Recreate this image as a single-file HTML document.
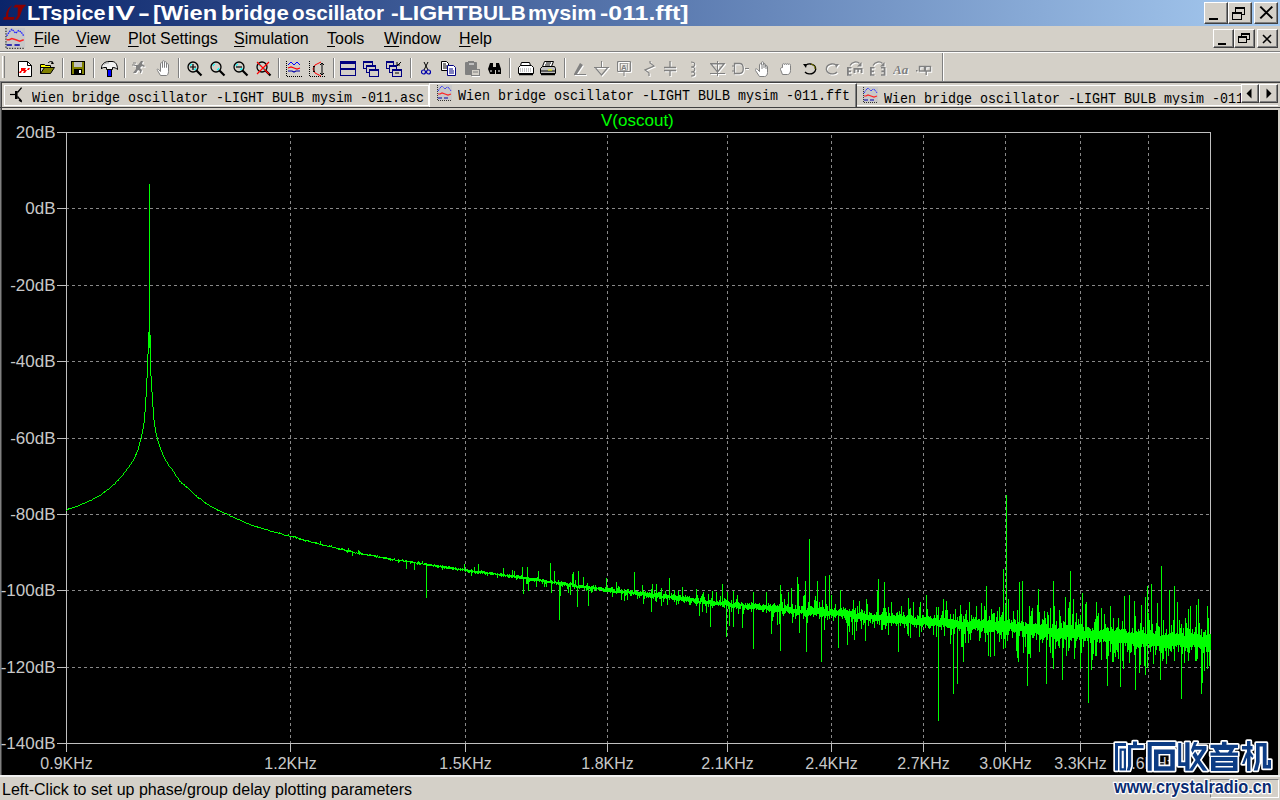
<!DOCTYPE html>
<html><head><meta charset="utf-8">
<style>
*{margin:0;padding:0;box-sizing:border-box}
html,body{width:1280px;height:800px;overflow:hidden;background:#d4d0c8;font-family:"Liberation Sans",sans-serif;position:relative}
.abs{position:absolute}
#title{left:0;top:0;width:1280px;height:26px;background:linear-gradient(to right,#0a246a 0%,#a6caf0 100%)}
.tw{position:absolute;top:1px;transform-origin:0 0;color:#fff;font-weight:bold;font-size:20.5px;line-height:24px;white-space:nowrap}
.btn{position:absolute;background:#d4d0c8;border-top:1px solid #fff;border-left:1px solid #fff;border-right:1px solid #404040;border-bottom:1px solid #404040;box-shadow:inset -1px -1px 0 #808080}
#menu{left:0;top:26px;width:1280px;height:25px}
#menu span{position:absolute;top:4px;font-size:16px;line-height:18px;color:#000;white-space:nowrap}
#menu u{text-decoration:underline;text-underline-offset:2px;text-decoration-thickness:1px}
.hl1{left:0;width:1280px;height:1px}
#plotbg{left:2px;top:110px;width:1276px;height:665px;background:#000}
#status{left:0;top:775px;width:1280px;height:25px}
#status .t{left:2px;top:6px;font-size:16px;line-height:18px;color:#000;white-space:nowrap}
.tab{position:absolute;font-family:"Liberation Mono",monospace;font-size:15px;line-height:16px;color:#000;white-space:nowrap;transform:scaleX(0.8889);transform-origin:0 0}
.sep{top:58px;width:2px;height:20px;border-left:1px solid #808080;border-right:1px solid #fff}
.tabbox{position:absolute;border-top:1px solid #fff;border-left:1px solid #fff;border-right:1px solid #fff;border-bottom:1px solid #fff}
</style></head><body>
<div id="title" class="abs">
  <svg class="abs" style="left:0;top:0" width="28" height="26" viewBox="0 0 28 26"><path d="M12.6 4.8L9.5 9L8.3 13L8.2 17H14.6L13.8 19.8H3L4 17H5.8L6.3 12.5L8.5 8.2Z" fill="#8b0000"/><path d="M15.2 4.8H26.2L22.8 8.6L21 13L19.8 16.5L17.6 19.8H14.9L16.5 17.2L17.6 15.6L17.9 7.6H13.2Z" fill="#8b0000"/></svg>
  <span class="tw" style="left:26.89px;transform:scaleX(1.054)">LTspice</span><span class="tw" style="left:107.34px;transform:scaleX(1.438)">IV</span><span class="tw" style="left:138.25px;transform:scaleX(1.750)">-</span><span class="tw" style="left:152.70px;transform:scaleX(1.152)">[Wien</span><span class="tw" style="left:220.88px;transform:scaleX(1.081)">bridge</span><span class="tw" style="left:292.49px;transform:scaleX(1.009)">oscillator</span><span class="tw" style="left:390.88px;transform:scaleX(1.125)">-LIGHT</span><span class="tw" style="left:467.97px;transform:scaleX(1.014)">BULB</span><span class="tw" style="left:527.92px;transform:scaleX(1.053)">mysim</span><span class="tw" style="left:599.79px;transform:scaleX(1.214)">-011.fft]</span>
  <div class="btn" style="left:1204px;top:2px;width:24px;height:22px"><svg class="abs" style="left:0;top:0" width="22" height="20"><rect x="4" y="15" width="9" height="2" fill="#000"/></svg></div><div class="btn" style="left:1228px;top:2px;width:24px;height:22px"><svg class="abs" style="left:0;top:0" width="22" height="20"><g fill="none" stroke="#000" shape-rendering="crispEdges"><path d="M6.5 4.5h9v7h-9z"/><path d="M6 5.5h10"/><path d="M3.5 9.5h9v7h-9z" fill="#d4d0c8"/><path d="M3 10.5h10"/></g></svg></div><div class="btn" style="left:1254px;top:2px;width:24px;height:22px"><svg class="abs" style="left:0;top:0" width="22" height="20"><path d="M5.3 3.6L17.3 15.4M17.3 3.6L5.3 15.4" stroke="#000" stroke-width="2"/></svg></div>
</div>
<div id="menu" class="abs">
  <svg class="abs" style="left:4px;top:2px" width="21" height="21" viewBox="0 0 16 16"><rect x="1" y="0" width="15" height="15" fill="#c8c8c8"/><path d="M1.5 0v15.5H16" stroke="#333" stroke-dasharray="1 1" fill="none"/>
<path d="M2 6l2-3l2-2l3 3l2-2l2 1l2 3" stroke="#22f" fill="none" stroke-dasharray="1.2 0.6"/><path d="M2 9h2l2-1l3 1l3 1l3-1" stroke="#f22" fill="none" stroke-width="1.2"/><path d="M2 13h4M8 13h4" stroke="#00a" stroke-width="1.2"/></svg>
  <span style="left:34px"><u>F</u>ile</span>
  <span style="left:76px"><u>V</u>iew</span>
  <span style="left:128px"><u>P</u>lot Settings</span>
  <span style="left:234px"><u>S</u>imulation</span>
  <span style="left:327px"><u>T</u>ools</span>
  <span style="left:384px"><u>W</u>indow</span>
  <span style="left:459px"><u>H</u>elp</span>
  <div class="btn" style="left:1213px;top:3px;width:21px;height:19px"><svg class="abs" style="left:0;top:0" width="19" height="17"><rect x="4" y="13" width="8" height="2" fill="#000"/></svg></div><div class="btn" style="left:1234px;top:3px;width:21px;height:19px"><svg class="abs" style="left:0;top:0" width="19" height="17"><g fill="none" stroke="#000" shape-rendering="crispEdges"><rect x="6.5" y="3.5" width="8" height="6"/><path d="M6 4.5h9"/><rect x="3.5" y="6.5" width="8" height="6" fill="#d4d0c8"/><path d="M3 7.5h9"/></g></svg></div><div class="btn" style="left:1257px;top:3px;width:21px;height:19px"><svg class="abs" style="left:0;top:0" width="19" height="17"><path d="M5 5L13 13M13 5L5 13" stroke="#000" stroke-width="1.6"/></svg></div>
</div>
<div class="abs hl1" style="top:51px;background:#808080"></div>
<div class="abs hl1" style="top:52px;background:#fff"></div>
<div class="abs" style="left:2px;top:56px;width:3px;height:22px;border-left:1px solid #fff;border-right:1px solid #808080"></div>
<svg class="abs" style="left:17px;top:61px" width="17" height="17" viewBox="0 0 17 17"><path d="M1.5 0.5H10.5L14.5 4.5V15.5H1.5Z" fill="#fff" stroke="#000"/><path d="M10.5 0.5V4.5H14.5" fill="none" stroke="#000"/>
<path d="M4 7h5l-1 2h2l1-2h2l-1 2h-2l-2 3h-2l1-2h-3zM3 10h2l-1 2h-2z" fill="#f00"/></svg><svg class="abs" style="left:40px;top:61px" width="17" height="17" viewBox="0 0 17 17"><path d="M0.5 3.5h4l1 1h5v2h-10z" fill="#ff0" stroke="#000"/><path d="M0.5 12.5V4.5M0.5 12.5h10l4-6h-10z" fill="#808000" stroke="#000"/>
<path d="M8 2c2-2 4-2 5 0" fill="none" stroke="#000"/><path d="M12 0l2 3l-3 0z" fill="#000"/></svg><svg class="abs" style="left:71px;top:61px" width="17" height="17" viewBox="0 0 17 17"><rect x="0.5" y="0.5" width="13" height="13" fill="#808000" stroke="#000"/><rect x="3" y="1" width="8" height="5" fill="#c0c0c0"/>
<rect x="3" y="8" width="8" height="5" fill="#000"/><rect x="8" y="9" width="2" height="3" fill="#fff"/></svg><svg class="abs" style="left:101px;top:61px" width="17" height="17" viewBox="0 0 17 17"><path d="M0.5 7C0.5 3 4 0.5 8 0.5H11C14.5 0.5 16.5 3.5 16.5 8.5C15 7 13.5 6.5 11.5 6.5V8.5H5.5V6.5H3C2 6.5 1 7 0.5 8Z" fill="#f0f0f0" stroke="#000"/><path d="M2.5 4C3.5 2.5 5 1.8 8 1.8" stroke="#a0a0a0" fill="none"/>
<rect x="6.5" y="8.5" width="4" height="7" fill="#0000ff" stroke="#000"/></svg><svg class="abs" style="left:132px;top:60px" width="17" height="17" viewBox="0 0 17 17"><g transform="translate(1,1)" opacity="1"><path d="M9 1l2 0l-1 3l3 2l-1 1l-2-1l-2 2l2 2l-1 3l-1 0l0-2l-2-1l-2 3l-3 0l3-4l0-3l-2 0l1-1l3 0z" fill="#fff"/><path d="M1 3h3M0 5h3" stroke="#fff"/></g><g><path d="M9 1l2 0l-1 3l3 2l-1 1l-2-1l-2 2l2 2l-1 3l-1 0l0-2l-2-1l-2 3l-3 0l3-4l0-3l-2 0l1-1l3 0z" fill="#808080"/><path d="M1 3h3M0 5h3" stroke="#808080"/></g></svg><svg class="abs" style="left:156px;top:60px" width="17" height="17" viewBox="0 0 17 17"><path d="M4.5 15.5l-3-5c-1-1 0-2 1-1l2 2v-8c0-1 2-1 2 0v4v-6c0-1 2-1 2 0v6v-5c0-1 2-1 2 0v5v-3c0-1 2-1 2 0v7c0 2-1 4-2 4z" fill="#fff" stroke="#808080"/></svg><svg class="abs" style="left:187px;top:61px" width="17" height="17" viewBox="0 0 17 17"><circle cx="6" cy="6" r="5" fill="#d4d0c8" stroke="#000" stroke-width="1.3"/><path d="M3 5a3 3 0 0 1 2-2M9 7a3 3 0 0 1-2 2" stroke="#0ff" stroke-width="1.2" fill="none"/>
<path d="M9.5 9.5L14.5 14.5" stroke="#000" stroke-width="2.2"/><path d="M3 6h6M6 3v6" stroke="#000" stroke-width="1.2"/></svg><svg class="abs" style="left:210px;top:61px" width="17" height="17" viewBox="0 0 17 17"><circle cx="6" cy="6" r="5" fill="#d4d0c8" stroke="#000" stroke-width="1.3"/><path d="M3 5a3 3 0 0 1 2-2M9 7a3 3 0 0 1-2 2" stroke="#0ff" stroke-width="1.2" fill="none"/>
<path d="M9.5 9.5L14.5 14.5" stroke="#000" stroke-width="2.2"/></svg><svg class="abs" style="left:233px;top:61px" width="17" height="17" viewBox="0 0 17 17"><circle cx="6" cy="6" r="5" fill="#d4d0c8" stroke="#000" stroke-width="1.3"/><path d="M3 5a3 3 0 0 1 2-2M9 7a3 3 0 0 1-2 2" stroke="#0ff" stroke-width="1.2" fill="none"/>
<path d="M9.5 9.5L14.5 14.5" stroke="#000" stroke-width="2.2"/><path d="M3 6h6" stroke="#000" stroke-width="1.2"/></svg><svg class="abs" style="left:256px;top:61px" width="17" height="17" viewBox="0 0 17 17"><circle cx="6" cy="6" r="5" fill="#d4d0c8" stroke="#000" stroke-width="1.3"/><path d="M3 5a3 3 0 0 1 2-2M9 7a3 3 0 0 1-2 2" stroke="#0ff" stroke-width="1.2" fill="none"/>
<path d="M9.5 9.5L14.5 14.5" stroke="#000" stroke-width="2.2"/><path d="M1 1L13 13M13 1L1 13" stroke="#f00" stroke-width="1.2"/></svg><svg class="abs" style="left:286px;top:61px" width="17" height="17" viewBox="0 0 17 17"><path d="M0.5 0v15.5H16" stroke="#000" fill="none" stroke-dasharray="1 1"/><path d="M2 4l3-3l3 3l3-3l3 3" stroke="#00f" fill="none"/>
<path d="M2 7l3-1l3 1l3 1l3-1" stroke="#f00" fill="none" stroke-width="1.2"/><path d="M2 10h4l2 1l2-1h4" stroke="#00a" fill="none" stroke-width="1.2"/></svg><svg class="abs" style="left:309px;top:61px" width="17" height="17" viewBox="0 0 17 17"><path d="M0.5 0v15.5H16" stroke="#000" fill="none" stroke-dasharray="1 1"/><path d="M12 1l-6 3l-2 4l2 4l6 3" stroke="#f00" fill="none"/>
<path d="M13 2v12M11 4l2-2l2 2M11 12l2 2l2-2M5 5v6M4 6l1-1l1 1M4 10l1 1l1-1" stroke="#000" fill="none"/></svg><svg class="abs" style="left:340px;top:61px" width="17" height="17" viewBox="0 0 17 17"><rect x="0.5" y="0.5" width="15" height="14" fill="#d4d0c8" stroke="#000080"/><rect x="1" y="1" width="15" height="2" fill="#000080"/><rect x="1" y="7" width="15" height="2" fill="#000080"/><path d="M0.5 7.5h15" stroke="#000080"/></svg><svg class="abs" style="left:363px;top:61px" width="17" height="17" viewBox="0 0 17 17"><rect x="0.5" y="0.5" width="9" height="7" fill="#d4d0c8" stroke="#000080"/><rect x="0" y="0" width="10" height="2" fill="#000080"/>
<rect x="3.5" y="4.5" width="9" height="7" fill="#d4d0c8" stroke="#000080"/><rect x="3" y="4" width="10" height="2" fill="#000080"/>
<rect x="6.5" y="8.5" width="9" height="7" fill="#d4d0c8" stroke="#000080"/><rect x="6" y="8" width="10" height="2" fill="#000080"/></svg><svg class="abs" style="left:386px;top:61px" width="17" height="17" viewBox="0 0 17 17"><rect x="0.5" y="0.5" width="7" height="7" fill="#d4d0c8" stroke="#000080"/><rect x="0" y="0" width="8" height="2" fill="#000080"/>
<rect x="3.5" y="4.5" width="7" height="7" fill="#d4d0c8" stroke="#000080"/><rect x="3" y="4" width="8" height="2" fill="#000080"/>
<rect x="6.5" y="8.5" width="9" height="7" fill="#d4d0c8" stroke="#000080"/><rect x="6" y="8" width="10" height="2" fill="#000080"/><path d="M9 12h4" stroke="#000"/><path d="M11 5l4-4M11 1v3h3" stroke="#000" fill="none"/></svg><svg class="abs" style="left:421px;top:61px" width="17" height="17" viewBox="0 0 17 17"><path d="M3 1l4 8M7 1l-4 8" stroke="#000"/><circle cx="2.5" cy="11" r="2" fill="none" stroke="#00a" stroke-width="1.2"/><circle cx="7.5" cy="11" r="2" fill="none" stroke="#00a" stroke-width="1.2"/></svg><svg class="abs" style="left:441px;top:61px" width="17" height="17" viewBox="0 0 17 17"><path d="M0.5 0.5h5l2 2v7h-7z" fill="#fff" stroke="#000"/><path d="M2 3h3M2 5h4M2 7h4" stroke="#000"/>
<path d="M6.5 4.5h6l2 2v8h-8z" fill="#fff" stroke="#000080"/><path d="M8 8h4M8 10h5M8 12h5" stroke="#000080"/></svg><svg class="abs" style="left:464px;top:61px" width="17" height="17" viewBox="0 0 17 17"><rect x="1" y="1" width="12" height="13" rx="1" fill="#808080"/><rect x="4" y="0" width="6" height="3" fill="#808080"/><path d="M5 3h5" stroke="#fff"/><rect x="7.5" y="8.5" width="8" height="6" fill="#d4d0c8" stroke="#808080"/><path d="M9 11h5" stroke="#808080"/><path d="M8 15.5h8" stroke="#fff"/></svg><svg class="abs" style="left:487px;top:61px" width="17" height="17" viewBox="0 0 17 17"><path d="M1 8l2-6h3v4h3v-4h3l2 6v5h-5v-4h-1v4h-5z" fill="#000"/><path d="M3 10h2M11 10h2" stroke="#fff"/></svg><svg class="abs" style="left:518px;top:61px" width="17" height="17" viewBox="0 0 17 17"><path d="M3.5 1.5h8l1 3h-10z" fill="#fff" stroke="#000"/><path d="M0.5 6.5l2-2h11l2 2v6h-15z" fill="#fff" stroke="#000"/><path d="M2 8h12M2 10h12" stroke="#888" stroke-dasharray="1 1"/><path d="M1 13.5h14" stroke="#000" stroke-width="1.5"/></svg><svg class="abs" style="left:540px;top:61px" width="17" height="17" viewBox="0 0 17 17"><path d="M4.5 0.5h9l-2 5h-9z" fill="#fff" stroke="#000"/><path d="M6 2h5M5 4h5" stroke="#000"/><path d="M0.5 7.5l2-2h12l1 2v5h-15z" fill="#c0c0c0" stroke="#000"/><path d="M1 10h14" stroke="#000"/><path d="M8 9h4" stroke="#ff0" stroke-width="1"/><path d="M1 13.5h14" stroke="#000" stroke-width="1.5"/></svg><svg class="abs" style="left:573px;top:61px" width="17" height="17" viewBox="0 0 17 17"><g transform="translate(1,1)" opacity="1"><path d="M1 13.5h12" stroke="#fff"/><path d="M1 13l6-11l3 2l-6 9z" fill="#fff"/></g><g><path d="M1 13.5h12" stroke="#808080"/><path d="M1 13l6-11l3 2l-6 9z" fill="#808080"/></g></svg><svg class="abs" style="left:594px;top:61px" width="17" height="17" viewBox="0 0 17 17"><g transform="translate(1,1)" opacity="1"><path d="M7.5 0v6M0 6.5h15" stroke="#fff" stroke-width="1"/><path d="M1.5 7l6 7l6-7" stroke="#fff" fill="none" stroke-width="1.2"/></g><g><path d="M7.5 0v6M0 6.5h15" stroke="#808080" stroke-width="1"/><path d="M1.5 7l6 7l6-7" stroke="#808080" fill="none" stroke-width="1.2"/></g></svg><svg class="abs" style="left:617px;top:61px" width="17" height="17" viewBox="0 0 17 17"><g transform="translate(1,1)" opacity="1"><rect x="0.5" y="0.5" width="13" height="10" rx="1" fill="none" stroke="#fff" stroke-width="1.2"/><path d="M7 11v4" stroke="#fff"/><text x="7" y="9" font-size="8" font-family="Liberation Sans" text-anchor="middle" fill="#fff" font-weight="bold">A</text><rect x="3.5" y="2.5" width="7" height="7" fill="none" stroke="#fff" stroke-width="0.6"/></g><g><rect x="0.5" y="0.5" width="13" height="10" rx="1" fill="none" stroke="#808080" stroke-width="1.2"/><path d="M7 11v4" stroke="#808080"/><text x="7" y="9" font-size="8" font-family="Liberation Sans" text-anchor="middle" fill="#808080" font-weight="bold">A</text><rect x="3.5" y="2.5" width="7" height="7" fill="none" stroke="#808080" stroke-width="0.6"/></g></svg><svg class="abs" style="left:642px;top:61px" width="17" height="17" viewBox="0 0 17 17"><g transform="translate(1,1)" opacity="1"><path d="M8 0v2l4 3l-9 4l4 3v3" stroke="#fff" fill="none" stroke-width="1.2"/></g><g><path d="M8 0v2l4 3l-9 4l4 3v3" stroke="#808080" fill="none" stroke-width="1.2"/></g></svg><svg class="abs" style="left:664px;top:61px" width="17" height="17" viewBox="0 0 17 17"><g transform="translate(1,1)" opacity="1"><path d="M6 0v6M6 9v6M0 6.5h12M0 9.5h12" stroke="#fff" stroke-width="1.3"/></g><g><path d="M6 0v6M6 9v6M0 6.5h12M0 9.5h12" stroke="#808080" stroke-width="1.3"/></g></svg><svg class="abs" style="left:690px;top:61px" width="17" height="17" viewBox="0 0 17 17"><g transform="translate(1,1)" opacity="1"><path d="M1 1c5 0 5 5 0 5c5 0 5 5 0 5c5 0 5 4 0 4" stroke="#fff" fill="none" stroke-width="1.2"/></g><g><path d="M1 1c5 0 5 5 0 5c5 0 5 5 0 5c5 0 5 4 0 4" stroke="#808080" fill="none" stroke-width="1.2"/></g></svg><svg class="abs" style="left:710px;top:61px" width="17" height="17" viewBox="0 0 17 17"><g transform="translate(1,1)" opacity="1"><path d="M7.5 0v15M0 2.5h15M0 12.5h15" stroke="#fff"/><path d="M1 3l6.5 8l6.5-8z" fill="none" stroke="#fff" stroke-width="1.2"/></g><g><path d="M7.5 0v15M0 2.5h15M0 12.5h15" stroke="#808080"/><path d="M1 3l6.5 8l6.5-8z" fill="none" stroke="#808080" stroke-width="1.2"/></g></svg><svg class="abs" style="left:732px;top:61px" width="17" height="17" viewBox="0 0 17 17"><g transform="translate(1,1)" opacity="1"><path d="M2.5 2.5h5c5 0 5 10 0 10h-5z" fill="none" stroke="#fff" stroke-width="1.3"/><path d="M0 5h3M0 10h3M13 7.5h4" stroke="#fff"/></g><g><path d="M2.5 2.5h5c5 0 5 10 0 10h-5z" fill="none" stroke="#808080" stroke-width="1.3"/><path d="M0 5h3M0 10h3M13 7.5h4" stroke="#808080"/></g></svg><svg class="abs" style="left:755px;top:61px" width="17" height="17" viewBox="0 0 17 17"><path d="M4.5 15.5l-4-6c-1-2 1-2 2-1l2 2v-7c0-1 2-1 2 0v-2c0-1 2-1 2 0v2c0-1 2-1 2 0v2c0-1 2-1 2 0v6c0 2-1 4-3 4z" fill="#fff" stroke="#808080"/><path d="M7 3v5M9 2v5M11 4v4" stroke="#808080"/></svg><svg class="abs" style="left:779px;top:61px" width="17" height="17" viewBox="0 0 17 17"><path d="M3.5 13.5l-2-5c0-1 0-2 2-2v-3c0-1 2-1 2 0c0-1 2-1 2 0c0-1 2-1 2 0c0-1 2-1 2 1v5c0 2-1 4-3 4z" fill="#fff" stroke="#808080"/></svg><svg class="abs" style="left:802px;top:62px" width="17" height="17" viewBox="0 0 17 17"><path d="M4 3a6 5 0 1 1 -1 7" stroke="#000" fill="none" stroke-width="1.4"/><path d="M9 2a6 5 0 0 1 4 5" stroke="#808000" fill="none" stroke-width="1"/><path d="M1 2l4 0l-1 4z" fill="#000"/></svg><svg class="abs" style="left:825px;top:62px" width="17" height="17" viewBox="0 0 17 17"><g transform="translate(1,1)" opacity="1"><path d="M11 3a6 5 0 1 0 1 7" stroke="#fff" fill="none" stroke-width="1.4"/><path d="M14 2l-4 0l1 4z" fill="#fff"/></g><g><path d="M11 3a6 5 0 1 0 1 7" stroke="#808080" fill="none" stroke-width="1.4"/><path d="M14 2l-4 0l1 4z" fill="#808080"/></g></svg><svg class="abs" style="left:847px;top:59px" width="17" height="17" viewBox="0 0 17 17"><g transform="translate(1,1)" opacity="1"><path d="M0 8h4.5v1.6h-2.7v2h2.3v1.6h-2.3v2h2.7v1.6h-4.5z" fill="#fff"/><path d="M6.5 9h9v5h-1.7v-3.3h-1.9v2.6h-1.6v-2.6h-1.9v3.3h-1.9z" fill="#fff"/><path d="M3 6.5C5 2.5 10 2 12.5 4.5" stroke="#fff" stroke-width="1.2" fill="none"/><path d="M14.5 3v4.5h-4.5z" fill="#fff"/></g><g><path d="M0 8h4.5v1.6h-2.7v2h2.3v1.6h-2.3v2h2.7v1.6h-4.5z" fill="#808080"/><path d="M6.5 9h9v5h-1.7v-3.3h-1.9v2.6h-1.6v-2.6h-1.9v3.3h-1.9z" fill="#808080"/><path d="M3 6.5C5 2.5 10 2 12.5 4.5" stroke="#808080" stroke-width="1.2" fill="none"/><path d="M14.5 3v4.5h-4.5z" fill="#808080"/></g></svg><svg class="abs" style="left:870px;top:59px" width="17" height="17" viewBox="0 0 17 17"><g transform="translate(1,1)" opacity="1"><path d="M0 8h4.5v1.6h-2.7v2h2.3v1.6h-2.3v2h2.7v1.6h-4.5z" fill="#fff"/><path d="M15.5 8h-4.5v1.6h2.7v2h-2.3v1.6h2.3v2h-2.7v1.6h4.5z" fill="#fff"/><path d="M3 6.5C5 2.5 10 2 12.5 4.5" stroke="#fff" stroke-width="1.2" fill="none"/><path d="M14.5 3v4.5h-4.5z" fill="#fff"/></g><g><path d="M0 8h4.5v1.6h-2.7v2h2.3v1.6h-2.3v2h2.7v1.6h-4.5z" fill="#808080"/><path d="M15.5 8h-4.5v1.6h2.7v2h-2.3v1.6h2.3v2h-2.7v1.6h4.5z" fill="#808080"/><path d="M3 6.5C5 2.5 10 2 12.5 4.5" stroke="#808080" stroke-width="1.2" fill="none"/><path d="M14.5 3v4.5h-4.5z" fill="#808080"/></g></svg><svg class="abs" style="left:893px;top:61px" width="17" height="17" viewBox="0 0 17 17"><g transform="translate(1,1)" opacity="1"><text x="0" y="13" font-size="13" font-style="italic" font-weight="bold" font-family="Liberation Serif" fill="#fff">Aa</text></g><g><text x="0" y="13" font-size="13" font-style="italic" font-weight="bold" font-family="Liberation Serif" fill="#808080">Aa</text></g></svg><svg class="abs" style="left:916px;top:59px" width="17" height="17" viewBox="0 0 17 17"><g transform="translate(1,1)" opacity="1"><rect x="0" y="11" width="1.5" height="1.5" fill="#fff"/><rect x="3.5" y="7.5" width="5" height="4.5" fill="none" stroke="#fff" stroke-width="1.4"/><rect x="9.5" y="7.5" width="5" height="4.5" fill="none" stroke="#fff" stroke-width="1.4"/><path d="M10.2 12v4" stroke="#fff" stroke-width="1.4"/></g><g><rect x="0" y="11" width="1.5" height="1.5" fill="#808080"/><rect x="3.5" y="7.5" width="5" height="4.5" fill="none" stroke="#808080" stroke-width="1.4"/><rect x="9.5" y="7.5" width="5" height="4.5" fill="none" stroke="#808080" stroke-width="1.4"/><path d="M10.2 12v4" stroke="#808080" stroke-width="1.4"/></g></svg><div class="abs sep" style="left:62px"></div><div class="abs sep" style="left:93px"></div><div class="abs sep" style="left:124px"></div><div class="abs sep" style="left:178px"></div><div class="abs sep" style="left:278px"></div><div class="abs sep" style="left:333px"></div><div class="abs sep" style="left:410px"></div><div class="abs sep" style="left:509px"></div><div class="abs sep" style="left:564px"></div>
<div class="abs" style="left:942px;top:53px;width:2px;height:28px;border-left:1px solid #808080;border-right:1px solid #fff"></div>
<div class="abs hl1" style="top:81px;background:#808080"></div>
<div class="abs hl1" style="top:82px;background:#404040"></div>
<div class="abs" style="left:0;top:82px;width:1px;height:693px;background:#808080"></div><div class="abs" style="left:1px;top:82px;width:1px;height:693px;background:#404040"></div>
<!-- tabs -->
<div class="tabbox" style="left:4px;top:85px;width:425px;height:21px"></div>
<svg class="abs" style="left:8px;top:85px" width="16" height="20" viewBox="0 0 16 20"><path d="M2 9.5H7.5" stroke="#000" stroke-width="1.2"/><rect x="7" y="6" width="2.6" height="8" fill="#000"/><path d="M9.5 7.5L13.6 2.6M9.5 11.5L13.6 16.5" stroke="#000" stroke-width="1.3"/><path d="M14 17.5L10.5 15.8L12.8 13.5Z" fill="#000"/></svg>
<div class="tab" style="left:32px;top:91px">Wien bridge oscillator -LIGHT BULB mysim -011.asc</div>
<div class="abs" style="left:429px;top:83px;width:428px;height:24px;background:#d4d0c8;border-top:1px solid #fff;border-left:1px solid #fff;border-right:1px solid #404040;box-shadow:inset -1px 0 0 #808080"></div>
<svg class="abs" style="left:436px;top:85px" width="16" height="16" viewBox="0 0 16 16"><rect x="1" y="0" width="15" height="15" fill="#c8c8c8"/><path d="M1.5 0v15.5H16" stroke="#333" stroke-dasharray="1 1" fill="none"/>
<path d="M2 6l2-3l2-2l3 3l2-2l2 1l2 3" stroke="#22f" fill="none" stroke-dasharray="1.2 0.6"/><path d="M2 9h2l2-1l3 1l3 1l3-1" stroke="#f22" fill="none" stroke-width="1.2"/><path d="M2 13h4M8 13h4" stroke="#00a" stroke-width="1.2"/></svg>
<div class="tab" style="left:458px;top:89px">Wien bridge oscillator -LIGHT BULB mysim -011.fft</div>
<div class="abs" style="left:857px;top:85px;width:384px;height:21px;border-top:1px solid #fff;border-bottom:1px solid #fff;overflow:hidden">
  <svg class="abs" style="left:5px;top:1px" width="16" height="16" viewBox="0 0 16 16"><rect x="1" y="0" width="15" height="15" fill="#c8c8c8"/><path d="M1.5 0v15.5H16" stroke="#333" stroke-dasharray="1 1" fill="none"/>
<path d="M2 6l2-3l2-2l3 3l2-2l2 1l2 3" stroke="#22f" fill="none" stroke-dasharray="1.2 0.6"/><path d="M2 9h2l2-1l3 1l3 1l3-1" stroke="#f22" fill="none" stroke-width="1.2"/><path d="M2 13h4M8 13h4" stroke="#00a" stroke-width="1.2"/></svg>
  <div class="tab" style="left:27px;top:6px">Wien bridge oscillator -LIGHT BULB mysim -011.fft</div>
</div>
<div class="btn" style="left:1241px;top:84px;width:18px;height:19px"><svg class="abs" style="left:0;top:0" width="16" height="17"><path d="M4.5 8.5l5-5v10z" fill="#000"/></svg></div>
<div class="btn" style="left:1259px;top:84px;width:19px;height:19px"><svg class="abs" style="left:0;top:0" width="17" height="17"><path d="M11.5 8.5l-5-5v10z" fill="#000"/></svg></div>

<div class="abs" style="left:1241px;top:105px;width:37px;height:1px;background:#fff"></div>
<div class="abs hl1" style="top:107px;background:#404040"></div>
<div id="plotbg" class="abs"></div>

<svg class="abs" style="left:0;top:0" width="1280" height="800" viewBox="0 0 1280 800">
<g stroke="#888888" stroke-width="1" stroke-dasharray="3 3" shape-rendering="crispEdges"><line x1="66" y1="208.5" x2="1210" y2="208.5"/><line x1="66" y1="285.5" x2="1210" y2="285.5"/><line x1="66" y1="361.5" x2="1210" y2="361.5"/><line x1="66" y1="438.5" x2="1210" y2="438.5"/><line x1="66" y1="514.5" x2="1210" y2="514.5"/><line x1="66" y1="590.5" x2="1210" y2="590.5"/><line x1="66" y1="667.5" x2="1210" y2="667.5"/><line x1="290.5" y1="135" x2="290.5" y2="743"/><line x1="465.5" y1="135" x2="465.5" y2="743"/><line x1="607.5" y1="135" x2="607.5" y2="743"/><line x1="727.5" y1="135" x2="727.5" y2="743"/><line x1="831.5" y1="135" x2="831.5" y2="743"/><line x1="923.5" y1="135" x2="923.5" y2="743"/><line x1="1005.5" y1="135" x2="1005.5" y2="743"/><line x1="1080.5" y1="135" x2="1080.5" y2="743"/><line x1="1148.5" y1="135" x2="1148.5" y2="743"/></g>
<g stroke="#c0c0c0" stroke-width="1" shape-rendering="crispEdges">
<rect x="66.5" y="132.5" width="1144" height="611" fill="none"/><line x1="57" y1="132.5" x2="66" y2="132.5"/><line x1="57" y1="208.5" x2="66" y2="208.5"/><line x1="57" y1="285.5" x2="66" y2="285.5"/><line x1="57" y1="361.5" x2="66" y2="361.5"/><line x1="57" y1="438.5" x2="66" y2="438.5"/><line x1="57" y1="514.5" x2="66" y2="514.5"/><line x1="57" y1="590.5" x2="66" y2="590.5"/><line x1="57" y1="667.5" x2="66" y2="667.5"/><line x1="57" y1="743.5" x2="66" y2="743.5"/><line x1="66.5" y1="743" x2="66.5" y2="752"/><line x1="290.5" y1="743" x2="290.5" y2="752"/><line x1="465.5" y1="743" x2="465.5" y2="752"/><line x1="607.5" y1="743" x2="607.5" y2="752"/><line x1="727.5" y1="743" x2="727.5" y2="752"/><line x1="831.5" y1="743" x2="831.5" y2="752"/><line x1="923.5" y1="743" x2="923.5" y2="752"/><line x1="1005.5" y1="743" x2="1005.5" y2="752"/><line x1="1080.5" y1="743" x2="1080.5" y2="752"/><line x1="1148.5" y1="743" x2="1148.5" y2="752"/></g>
<g fill="#c8c8c8" font-family="Liberation Sans, sans-serif" font-size="16"><text x="55.5" y="138" text-anchor="end" font-size="17">20dB</text><text x="55.5" y="214" text-anchor="end" font-size="17">0dB</text><text x="55.5" y="291" text-anchor="end" font-size="17">-20dB</text><text x="55.5" y="367" text-anchor="end" font-size="17">-40dB</text><text x="55.5" y="444" text-anchor="end" font-size="17">-60dB</text><text x="55.5" y="520" text-anchor="end" font-size="17">-80dB</text><text x="55.5" y="596" text-anchor="end" font-size="17">-100dB</text><text x="55.5" y="673" text-anchor="end" font-size="17">-120dB</text><text x="55.5" y="749" text-anchor="end" font-size="17">-140dB</text><text transform="translate(66.5 769) scale(0.94 1)" text-anchor="middle" font-size="17">0.9KHz</text><text transform="translate(290.5 769) scale(0.94 1)" text-anchor="middle" font-size="17">1.2KHz</text><text transform="translate(465.5 769) scale(0.94 1)" text-anchor="middle" font-size="17">1.5KHz</text><text transform="translate(607.5 769) scale(0.94 1)" text-anchor="middle" font-size="17">1.8KHz</text><text transform="translate(727.5 769) scale(0.94 1)" text-anchor="middle" font-size="17">2.1KHz</text><text transform="translate(831.5 769) scale(0.94 1)" text-anchor="middle" font-size="17">2.4KHz</text><text transform="translate(923.5 769) scale(0.94 1)" text-anchor="middle" font-size="17">2.7KHz</text><text transform="translate(1005.5 769) scale(0.94 1)" text-anchor="middle" font-size="17">3.0KHz</text><text transform="translate(1080.5 769) scale(0.94 1)" text-anchor="middle" font-size="17">3.3KHz</text><text transform="translate(1148.5 769) scale(0.94 1)" text-anchor="middle" font-size="17">3.6KHz</text></g>
<text x="637.4" y="126" fill="#00ff00" font-family="Liberation Sans, sans-serif" font-size="17" text-anchor="middle">V(oscout)</text>
<path d="M66 510v1M67 509v1M68 508v2M69 508v1M70 508v1M71 508v1M72 507v1M73 507v1M74 507v1M75 506v1M76 506v1M77 506v1M78 505v1M79 505v1M80 504v1M81 504v1M82 503v1M83 503v1M84 503v1M85 502v1M86 502v1M87 501v1M88 501v1M89 500v1M90 500v1M91 500v1M92 499v1M93 498v1M94 498v1M95 497v1M96 497v1M97 496v1M98 496v1M99 495v1M100 495v1M101 494v1M102 493v1M103 492v1M104 491v2M105 491v1M106 490v1M107 489v1M108 489v1M109 488v1M110 487v1M111 486v1M112 485v1M113 484v1M114 484v1M115 482v2M116 481v1M117 480v1M118 479v2M119 478v1M120 477v1M121 476v1M122 475v1M123 473v2M124 472v1M125 471v1M126 469v2M127 468v1M128 467v1M129 465v2M130 464v1M131 462v2M132 461v1M133 459v2M134 457v2M135 454v3M136 452v3M137 450v2M138 446v4M139 442v4M140 439v3M141 434v5M142 429v5M143 423v6M144 412v11M145 397v15M146 378v19M147 354v24M148 332v22M149 184v164M150 335v41M151 376v16M152 392v15M153 407v13M154 420v7M155 427v6M156 433v4M157 437v4M158 441v3M159 444v3M160 447v3M161 450v2M162 452v3M163 455v2M164 457v2M165 459v2M166 461v1M167 462v2M168 464v2M169 466v1M170 467v1M171 468v1M172 469v2M173 471v1M174 472v2M175 474v2M176 476v1M177 477v1M178 478v2M179 480v2M180 481v1M181 482v2M182 483v1M183 484v1M184 484v2M185 486v1M186 486v2M187 487v1M188 488v1M189 489v1M190 490v1M191 491v1M192 492v1M193 493v1M194 494v1M195 495v1M196 495v2M197 497v1M198 497v2M199 498v1M200 498v1M201 499v1M202 500v1M203 501v1M204 502v1M205 502v2M206 503v1M207 504v1M208 504v1M209 505v1M210 506v1M211 506v1M212 507v1M213 507v1M214 508v1M215 508v1M216 509v1M217 509v2M218 510v1M219 510v1M220 511v1M221 511v1M222 512v1M223 512v1M224 513v1M225 513v1M226 513v1M227 514v1M228 514v1M229 515v1M230 516v1M231 516v1M232 516v1M233 517v1M234 517v1M235 518v1M236 518v1M237 519v1M238 519v1M239 519v1M240 520v1M241 520v1M242 521v1M243 521v1M244 522v1M245 522v1M246 523v1M247 523v1M248 523v1M249 524v1M250 524v1M251 525v1M252 525v1M253 525v1M254 526v1M255 526v1M256 526v1M257 526v2M258 527v1M259 527v1M260 527v1M261 528v1M262 528v1M263 528v1M264 529v1M265 529v1M266 529v1M267 529v1M268 530v1M269 530v1M270 531v1M271 531v1M272 531v1M273 531v1M274 532v1M275 532v1M276 532v1M277 532v1M278 533v1M279 532v2M280 533v1M281 533v1M282 534v1M283 534v1M284 535v1M285 535v1M286 535v1M287 535v1M288 534v2M289 536v1M290 536v1M291 536v1M292 536v1M293 536v2M294 536v1M295 536v2M296 537v2M297 537v1M298 538v1M299 538v2M300 538v2M301 539v1M302 539v1M303 539v2M304 540v1M305 540v2M306 540v1M307 540v1M308 540v2M309 541v1M310 541v1M311 542v1M312 542v1M313 542v1M314 542v1M315 542v2M316 542v2M317 543v1M318 543v1M319 544v1M320 541v4M321 544v1M322 544v2M323 545v1M324 545v1M325 545v1M326 545v1M327 546v1M328 546v1M329 545v2M330 546v1M331 545v2M332 547v1M333 547v1M334 547v1M335 547v1M336 548v1M337 548v1M338 548v2M339 548v2M340 549v1M341 548v2M342 548v2M343 549v1M344 549v2M345 550v1M346 550v2M347 550v3M348 548v4M349 550v2M350 550v2M351 551v1M352 551v5M353 552v1M354 552v1M355 553v1M356 552v1M357 553v1M358 550v4M359 551v4M360 552v2M361 553v2M362 553v2M363 554v1M364 554v1M365 554v1M366 554v1M367 554v2M368 555v1M369 554v2M370 554v2M371 555v1M372 555v1M373 555v1M374 555v2M375 555v2M376 556v2M377 555v2M378 557v1M379 556v2M380 557v1M381 557v1M382 557v1M383 557v2M384 557v2M385 557v2M386 557v2M387 558v1M388 558v2M389 558v2M390 558v3M391 559v1M392 559v2M393 559v1M394 558v2M395 560v1M396 560v1M397 560v1M398 559v4M399 560v2M400 560v1M401 560v1M402 559v2M403 560v2M404 561v1M405 560v2M406 560v9M407 561v1M408 561v1M409 561v1M410 561v3M411 561v2M412 561v2M413 562v1M414 562v8M415 562v1M416 563v1M417 562v3M418 561v3M419 562v3M420 563v2M421 563v1M422 561v3M423 564v1M424 563v2M425 563v2M426 563v35M427 564v2M428 564v2M429 564v2M430 564v2M431 564v2M432 565v1M433 565v2M434 564v2M435 565v2M436 565v2M437 565v3M438 565v3M439 566v1M440 565v2M441 566v2M442 565v5M443 566v2M444 566v3M445 566v2M446 566v3M447 567v2M448 566v3M449 566v3M450 567v2M451 567v2M452 567v3M453 567v3M454 568v1M455 567v3M456 568v2M457 569v2M458 568v2M459 569v1M460 568v3M461 569v1M462 568v3M463 569v1M464 564v7M465 570v2M466 569v2M467 569v3M468 570v3M469 570v3M470 570v2M471 569v7M472 570v3M473 571v1M474 567v6M475 571v3M476 571v2M477 571v3M478 564v10M479 571v2M480 571v3M481 570v3M482 571v3M483 571v2M484 571v3M485 572v3M486 572v2M487 572v4M488 573v1M489 572v2M490 572v3M491 572v3M492 572v3M493 573v2M494 573v1M495 573v2M496 574v1M497 573v5M498 574v1M499 574v2M500 573v3M501 573v4M502 574v2M503 568v9M504 574v2M505 575v2M506 575v1M507 574v3M508 575v3M509 574v4M510 575v2M511 575v3M512 570v8M513 575v2M514 571v7M515 576v2M516 575v5M517 575v4M518 575v3M519 576v3M520 576v3M521 575v4M522 567v12M523 577v17M524 577v2M525 577v2M526 577v7M527 567v17M528 577v14M529 578v4M530 578v3M531 578v3M532 578v3M533 578v3M534 578v4M535 578v3M536 578v9M537 577v4M538 571v10M539 579v3M540 579v2M541 580v2M542 579v5M543 579v3M544 580v7M545 580v4M546 580v7M547 581v2M548 581v2M549 581v2M550 563v20M551 580v13M552 581v3M553 582v1M554 571v13M555 581v2M556 582v3M557 582v2M558 580v5M559 582v38M560 582v14M561 581v5M562 582v5M563 582v3M564 582v4M565 582v3M566 583v3M567 583v6M568 584v9M569 583v4M570 582v13M571 583v2M572 574v13M573 572v15M574 584v5M575 580v7M576 585v3M577 586v21M578 571v17M579 585v4M580 585v3M581 585v3M582 585v3M583 577v11M584 586v4M585 586v2M586 585v6M587 583v7M588 586v20M589 586v3M590 587v4M591 586v7M592 586v6M593 585v4M594 587v3M595 585v5M596 587v4M597 588v1M598 587v3M599 587v4M600 587v3M601 587v3M602 588v3M603 588v4M604 589v3M605 587v5M606 578v14M607 587v5M608 588v4M609 588v4M610 588v5M611 587v5M612 587v10M613 589v4M614 589v4M615 591v2M616 582v12M617 588v5M618 586v7M619 587v6M620 591v2M621 589v11M622 590v4M623 591v2M624 589v12M625 591v5M626 590v5M627 589v11M628 589v4M629 591v3M630 591v5M631 590v6M632 590v4M633 592v3M634 572v22M635 590v5M636 591v4M637 591v8M638 592v4M639 592v6M640 591v5M641 592v4M642 585v10M643 591v13M644 592v7M645 591v5M646 593v5M647 592v5M648 593v5M649 592v5M650 593v5M651 589v23M652 584v14M653 594v5M654 591v6M655 593v8M656 584v18M657 593v5M658 592v5M659 592v7M660 592v7M661 588v18M662 596v2M663 594v8M664 594v5M665 591v7M666 594v5M667 595v10M668 595v3M669 578v22M670 596v2M671 593v6M672 595v5M673 594v6M674 590v12M675 595v5M676 596v9M677 596v5M678 591v13M679 595v6M680 595v5M681 597v4M682 587v14M683 596v6M684 597v6M685 595v6M686 597v5M687 596v5M688 597v5M689 596v9M690 598v7M691 598v5M692 598v3M693 598v4M694 599v4M695 598v6M696 589v17M697 595v9M698 598v5M699 601v15M700 598v6M701 596v6M702 594v18M703 592v12M704 597v7M705 600v6M706 601v12M707 601v3M708 594v13M709 600v4M710 600v27M711 598v8M712 591v17M713 601v5M714 601v5M715 602v3M716 592v13M717 601v4M718 602v4M719 600v5M720 596v10M721 602v3M722 584v23M723 601v6M724 598v10M725 599v6M726 600v37M727 592v14M728 601v8M729 602v24M730 603v4M731 600v12M732 604v4M733 591v36M734 603v5M735 602v5M736 599v10M737 595v13M738 602v12M739 603v6M740 604v5M741 602v4M742 603v25M743 604v10M744 605v5M745 603v5M746 605v4M747 603v7M748 604v6M749 603v6M750 605v4M751 602v10M752 603v6M753 592v57M754 604v5M755 603v5M756 604v6M757 604v5M758 604v6M759 603v7M760 605v5M761 606v4M762 605v7M763 604v8M764 605v5M765 605v4M766 592v21M767 606v4M768 603v8M769 605v7M770 604v7M771 606v28M772 605v16M773 604v13M774 603v10M775 605v7M776 606v6M777 605v20M778 606v6M779 604v20M780 585v66M781 594v17M782 602v12M783 608v8M784 599v15M785 605v8M786 606v5M787 604v8M788 592v21M789 607v7M790 607v6M791 588v26M792 604v19M793 609v8M794 609v4M795 605v14M796 609v7M797 577v38M798 584v31M799 606v27M800 610v3M801 606v8M802 606v7M803 596v23M804 595v21M805 581v36M806 610v42M807 608v15M808 602v14M809 539v76M810 606v10M811 606v9M812 607v7M813 608v9M814 600v15M815 596v19M816 601v15M817 581v33M818 608v6M819 602v17M820 607v10M821 607v55M822 600v17M823 607v9M824 609v21M825 576v42M826 604v12M827 606v14M828 611v5M829 575v44M830 609v6M831 595v22M832 609v7M833 610v11M834 608v9M835 604v14M836 610v6M837 611v4M838 610v38M839 609v7M840 590v26M841 608v9M842 610v9M843 607v9M844 609v9M845 608v12M846 610v13M847 610v35M848 611v15M849 609v23M850 611v6M851 611v11M852 609v26M853 600v19M854 610v30M855 608v14M856 614v17M857 606v16M858 613v6M859 601v18M860 612v9M861 609v20M862 610v10M863 613v12M864 611v12M865 614v27M866 599v21M867 604v16M868 615v11M869 612v9M870 613v10M871 613v6M872 615v9M873 615v7M874 614v14M875 615v6M876 612v9M877 591v33M878 579v42M879 615v10M880 615v5M881 614v16M882 612v18M883 608v17M884 582v43M885 608v21M886 612v14M887 616v7M888 607v28M889 613v10M890 616v7M891 602v24M892 613v10M893 615v9M894 615v8M895 616v8M896 613v13M897 612v12M898 615v37M899 611v12M900 614v12M901 606v17M902 616v8M903 612v12M904 615v13M905 617v7M906 616v10M907 615v19M908 598v38M909 609v14M910 608v30M911 615v9M912 616v9M913 602v23M914 618v9M915 617v8M916 619v9M917 615v10M918 616v9M919 607v30M920 602v24M921 618v14M922 615v12M923 615v10M924 617v7M925 617v11M926 595v30M927 609v17M928 616v12M929 617v12M930 616v12M931 618v8M932 619v7M933 618v17M934 615v11M935 618v7M936 607v30M937 615v11M938 607v114M939 620v7M940 618v9M941 615v15M942 611v14M943 599v28M944 618v18M945 610v16M946 601v26M947 610v18M948 619v9M949 619v9M950 614v30M951 619v16M952 619v10M953 614v80M954 620v14M955 609v19M956 620v7M957 617v67M958 621v8M959 616v15M960 605v24M961 614v33M962 622v25M963 616v46M964 619v15M965 614v29M966 610v17M967 620v11M968 622v21M969 602v32M970 621v19M971 615v18M972 619v11M973 617v12M974 619v10M975 617v13M976 606v22M977 620v11M978 619v11M979 619v22M980 621v17M981 603v29M982 620v11M983 619v9M984 606v27M985 610v32M986 586v47M987 621v14M988 620v36M989 616v16M990 620v37M991 609v23M992 614v18M993 613v19M994 613v43M995 622v8M996 617v14M997 611v23M998 621v12M999 607v35M1000 617v18M1001 615v24M1002 612v20M1003 569v80M1004 621v18M1005 605v43M1006 495v140M1007 620v21M1008 599v36M1009 619v12M1010 623v6M1011 620v11M1012 622v16M1013 611v21M1014 619v14M1015 620v12M1016 624v27M1017 610v48M1018 622v40M1019 582v54M1020 623v8M1021 621v10M1022 581v56M1023 622v31M1024 626v11M1025 622v25M1026 623v11M1027 624v62M1028 624v30M1029 606v48M1030 616v42M1031 611v24M1032 608v30M1033 624v14M1034 624v12M1035 623v10M1036 624v16M1037 605v29M1038 589v46M1039 612v40M1040 625v15M1041 624v15M1042 619v24M1043 620v20M1044 611v27M1045 618v19M1046 624v60M1047 612v28M1048 615v19M1049 628v19M1050 608v45M1051 628v9M1052 624v34M1053 581v88M1054 606v33M1055 625v24M1056 621v21M1057 629v12M1058 628v18M1059 610v38M1060 616v23M1061 623v15M1062 628v52M1063 621v27M1064 622v17M1065 597v43M1066 625v31M1067 625v12M1068 608v43M1069 602v46M1070 571v69M1071 625v16M1072 614v24M1073 599v39M1074 629v30M1075 622v26M1076 613v28M1077 625v14M1078 619v18M1079 624v16M1080 615v54M1081 624v29M1082 593v46M1083 627v20M1084 631v10M1085 604v37M1086 602v36M1087 627v14M1088 627v76M1089 628v10M1090 629v14M1091 631v39M1092 628v32M1093 630v24M1094 622v18M1095 619v37M1096 602v54M1097 616v26M1098 613v26M1099 631v12M1100 630v12M1101 608v52M1102 630v9M1103 629v13M1104 614v27M1105 624v18M1106 628v31M1107 627v59M1108 628v28M1109 631v10M1110 606v46M1111 627v17M1112 629v33M1113 618v44M1114 631v22M1115 630v27M1116 628v22M1117 627v25M1118 618v41M1119 629v14M1120 630v57M1121 629v14M1122 621v40M1123 629v40M1124 596v47M1125 629v17M1126 631v12M1127 633v19M1128 632v18M1129 595v68M1130 633v20M1131 632v20M1132 628v16M1133 633v13M1134 601v54M1135 616v74M1136 631v18M1137 632v15M1138 629v19M1139 631v42M1140 623v42M1141 605v42M1142 630v14M1143 627v20M1144 633v33M1145 597v78M1146 634v12M1147 586v82M1148 613v31M1149 620v28M1150 630v22M1151 584v63M1152 624v22M1153 633v31M1154 634v12M1155 631v24M1156 623v27M1157 603v43M1158 626v20M1159 627v24M1160 636v44M1161 566v87M1162 635v26M1163 620v39M1164 635v13M1165 633v18M1166 629v35M1167 635v13M1168 634v22M1169 590v59M1170 633v18M1171 625v27M1172 632v14M1173 620v29M1174 586v75M1175 634v12M1176 633v14M1177 602v43M1178 634v18M1179 620v25M1180 628v19M1181 624v75M1182 633v21M1183 628v19M1184 636v27M1185 618v33M1186 623v25M1187 628v24M1188 609v52M1189 629v24M1190 606v41M1191 633v17M1192 629v18M1193 634v11M1194 632v15M1195 627v34M1196 605v56M1197 634v25M1198 599v48M1199 623v25M1200 635v14M1201 629v65M1202 637v46M1203 632v21M1204 632v39M1205 630v17M1206 635v17M1207 606v63M1208 618v34M1209 634v32M1210 634v16" fill="none" stroke="#00ff00" stroke-width="1" shape-rendering="crispEdges" transform="translate(0.5,0)"/>
</svg>
<div id="status" class="abs">
  <div class="abs hl1" style="top:0;height:2px;background:#f0f0f0"></div>
  <div class="t abs">Left-Click to set up phase/group delay plotting parameters</div>
  <div class="abs" style="left:1210px;top:4px;width:69px;height:19px;border-top:1px solid #808080;border-left:1px solid #808080;border-bottom:1px solid #fff;border-right:1px solid #fff"></div>
</div>
<svg class="abs" style="left:0;top:0" width="1280" height="800" viewBox="0 0 1280 800">
<path d="M1115.00 743.00h11.00v3.00h-11.00Z M1115.00 743.00h3.00v27.50h-3.00Z M1119.50 748.50h2.20v22.00h-2.20Z M1123.80 748.50h2.20v22.00h-2.20Z M1119.50 748.50h6.50v2.20h-6.50Z M1119.50 768.30h6.50v2.20h-6.50Z M1133.00 741.50h4.00v3.60h-4.00Z M1128.00 745.00h15.60v3.20h-15.60Z M1128.00 745.00L1131.20 745.00L1131.20 766.00L1129.80 770.50L1126.80 770.50L1128.00 766.00Z M1147.70 742.00h27.60v4.00h-27.60Z M1147.70 742.00h4.00v28.70h-4.00Z M1154.00 749.40h4.50v21.30h-4.50Z M1170.30 749.40h4.50v21.30h-4.50Z M1154.00 749.40h20.80v4.50h-20.80Z M1154.00 766.20h20.80v4.50h-20.80Z M1178.20 743.00h3.00v23.00h-3.00Z M1178.20 762.30h10.00v3.70h-10.00Z M1185.30 742.20h4.20v28.50h-4.20Z M1194.00 742.00L1197.50 742.00L1195.50 746.00L1206.50 746.00L1206.50 749.80L1199.80 760.00L1207.50 770.80L1203.00 770.80L1197.50 763.00L1192.50 770.80L1188.80 770.80L1195.60 760.00L1192.50 755.00L1195.20 751.50L1197.80 756.00L1202.00 749.80L1194.50 749.80L1192.50 753.00L1191.00 750.00Z M1222.00 741.80h4.50v3.40h-4.50Z M1210.50 744.80h27.50v3.20h-27.50Z M1213.50 748.00L1234.50 748.00L1232.00 752.50L1228.00 752.50L1229.50 750.00L1218.50 750.00L1220.00 752.50L1216.00 752.50Z M1210.50 752.50h27.50v3.20h-27.50Z M1211.00 757.00h26.50v4.00h-26.50Z M1211.00 762.50h26.50v3.50h-26.50Z M1211.00 767.50h26.50v3.50h-26.50Z M1211.00 757.00h4.50v14.00h-4.50Z M1233.00 757.00h4.50v14.00h-4.50Z M1247.00 741.00h3.50v30.00h-3.50Z M1242.00 746.00h10.50v3.50h-10.50Z M1246.50 752.00L1247.50 756.00L1244.50 764.00L1242.00 764.00Z M1250.50 752.00L1253.50 756.00L1252.50 758.00L1250.50 756.00Z M1256.00 743.00h10.50v3.60h-10.50Z M1256.00 743.00L1259.60 743.00L1259.60 762.00L1257.50 770.50L1253.80 770.50L1256.00 762.00Z M1262.80 743.00h3.80v25.00h-3.80Z M1262.80 765.00h8.20v3.50h-8.20Z M1267.80 760.00h3.20v8.50h-3.20Z" fill="#fff" stroke="#fff" stroke-width="3.4" stroke-linejoin="round"/>
<path d="M1115.00 743.00h11.00v3.00h-11.00Z M1115.00 743.00h3.00v27.50h-3.00Z M1119.50 748.50h2.20v22.00h-2.20Z M1123.80 748.50h2.20v22.00h-2.20Z M1119.50 748.50h6.50v2.20h-6.50Z M1119.50 768.30h6.50v2.20h-6.50Z M1133.00 741.50h4.00v3.60h-4.00Z M1128.00 745.00h15.60v3.20h-15.60Z M1128.00 745.00L1131.20 745.00L1131.20 766.00L1129.80 770.50L1126.80 770.50L1128.00 766.00Z M1147.70 742.00h27.60v4.00h-27.60Z M1147.70 742.00h4.00v28.70h-4.00Z M1154.00 749.40h4.50v21.30h-4.50Z M1170.30 749.40h4.50v21.30h-4.50Z M1154.00 749.40h20.80v4.50h-20.80Z M1154.00 766.20h20.80v4.50h-20.80Z M1178.20 743.00h3.00v23.00h-3.00Z M1178.20 762.30h10.00v3.70h-10.00Z M1185.30 742.20h4.20v28.50h-4.20Z M1194.00 742.00L1197.50 742.00L1195.50 746.00L1206.50 746.00L1206.50 749.80L1199.80 760.00L1207.50 770.80L1203.00 770.80L1197.50 763.00L1192.50 770.80L1188.80 770.80L1195.60 760.00L1192.50 755.00L1195.20 751.50L1197.80 756.00L1202.00 749.80L1194.50 749.80L1192.50 753.00L1191.00 750.00Z M1222.00 741.80h4.50v3.40h-4.50Z M1210.50 744.80h27.50v3.20h-27.50Z M1213.50 748.00L1234.50 748.00L1232.00 752.50L1228.00 752.50L1229.50 750.00L1218.50 750.00L1220.00 752.50L1216.00 752.50Z M1210.50 752.50h27.50v3.20h-27.50Z M1211.00 757.00h26.50v4.00h-26.50Z M1211.00 762.50h26.50v3.50h-26.50Z M1211.00 767.50h26.50v3.50h-26.50Z M1211.00 757.00h4.50v14.00h-4.50Z M1233.00 757.00h4.50v14.00h-4.50Z M1247.00 741.00h3.50v30.00h-3.50Z M1242.00 746.00h10.50v3.50h-10.50Z M1246.50 752.00L1247.50 756.00L1244.50 764.00L1242.00 764.00Z M1250.50 752.00L1253.50 756.00L1252.50 758.00L1250.50 756.00Z M1256.00 743.00h10.50v3.60h-10.50Z M1256.00 743.00L1259.60 743.00L1259.60 762.00L1257.50 770.50L1253.80 770.50L1256.00 762.00Z M1262.80 743.00h3.80v25.00h-3.80Z M1262.80 765.00h8.20v3.50h-8.20Z M1267.80 760.00h3.20v8.50h-3.20Z" fill="#0c3c84" fill-rule="nonzero"/>
<text transform="translate(1114 792.5) scale(0.905 1)" font-family="Liberation Sans" font-weight="bold" font-size="18" fill="#0a2c72" stroke="#fff" stroke-width="2.4" paint-order="stroke" stroke-linejoin="round">www.crystalradio.cn</text>
</svg>
</body></html>
